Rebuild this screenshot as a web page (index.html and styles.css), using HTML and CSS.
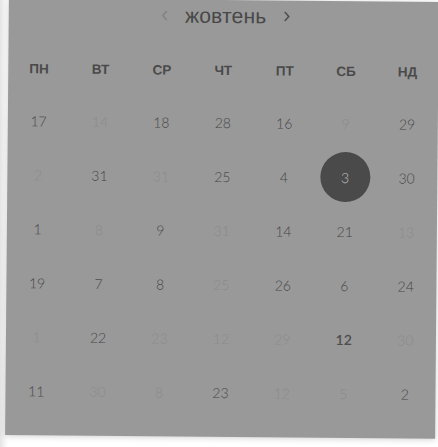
FILE: index.html
```html
<!DOCTYPE html>
<html lang="uk">
<head>
<meta charset="utf-8">
<link rel="stylesheet" href="styles.css">
</head>
<body>
<div class="page">
  <div class="card">
    <div class="month">
      <svg class="chev chev-prev" width="8" height="12" viewBox="0 0 8 12"><polyline points="6,1.5 2,6 6,10.5" fill="none" stroke="currentColor" stroke-width="1.6"/></svg>
      <span class="month-name">жовтень</span>
      <svg class="chev chev-next" width="8" height="12" viewBox="0 0 8 12"><polyline points="2,1.5 6,6 2,10.5" fill="none" stroke="currentColor" stroke-width="1.6"/></svg>
    </div>
    <div class="weekdays">
      <span>ПН</span><span>ВТ</span><span>СР</span><span>ЧТ</span><span>ПТ</span><span>СБ</span><span>НД</span>
    </div>
    <div class="days">
      <span class="d">17</span><span class="f">14</span><span class="d">18</span><span class="d">28</span><span class="d">16</span><span class="f">9</span><span class="d">29</span>
      <span class="f">2</span><span class="d">31</span><span class="f">31</span><span class="d">25</span><span class="d">4</span><span class="sel"><b>3</b></span><span class="d">30</span>
      <span class="d">1</span><span class="f">8</span><span class="d">9</span><span class="f">31</span><span class="d">14</span><span class="d">21</span><span class="f">13</span>
      <span class="d">19</span><span class="d">7</span><span class="d">8</span><span class="f">25</span><span class="d">26</span><span class="d">6</span><span class="d">24</span>
      <span class="f">1</span><span class="d">22</span><span class="f">23</span><span class="f">12</span><span class="f">29</span><span class="d strong">12</span><span class="f">30</span>
      <span class="d">11</span><span class="f">30</span><span class="f">8</span><span class="d">23</span><span class="f">12</span><span class="f">5</span><span class="d">2</span>
    </div>
  </div>
</div>
</body>
</html>
```

FILE: styles.css
```css
html, body {
  margin: 0;
  padding: 0;
  background: #ffffff;
  overflow: hidden;
}

.page {
  width: 438px;
  height: 447px;
  padding-left: 7px;
  box-sizing: border-box;
  background: linear-gradient(to right, #e4e4e4 0, #f6f6f6 5px, #ffffff 8px);
}

.card {
  width: 430px;
  height: 437px;
  background: #999999;
  box-sizing: border-box;
  padding-bottom: 18px;
  transform: rotate(0.5deg);
  transform-origin: 50% 50%;
  box-shadow: 0 1px 6px rgba(0, 0, 0, 0.18);
  font-family: "Lato", "Open Sans", sans-serif;
}

.month {
  height: 32px;
  display: flex;
  align-items: center;
  justify-content: center;
  gap: 16px;
  padding-left: 4px;
}

.month-name {
  font-family: "Liberation Sans", Arial, sans-serif;
  font-size: 21px;
  color: #484848;
  letter-spacing: 0.2px;
}

.chev {
  display: block;
}

.chev-prev {
  color: #838383;
}

.chev-next {
  color: #505050;
}

.weekdays {
  margin-top: 27px;
  height: 22px;
  display: grid;
  grid-template-columns: repeat(7, 1fr);
  align-items: center;
  justify-items: center;
  font-family: "Liberation Sans", Arial, sans-serif;
  font-weight: bold;
  font-size: 13.5px;
  color: #4a4a4a;
}

.days {
  margin-top: 14px;
  display: grid;
  grid-template-columns: repeat(7, 1fr);
  grid-auto-rows: 54px;
  align-items: center;
  justify-items: center;
  font-size: 14px;
  font-weight: 300;
}

.d {
  color: #464646;
}

.f {
  color: #8b8b8b;
}

.strong {
  font-weight: 600;
  color: #4e4e4e;
}

.sel {
  width: 50px;
  height: 50px;
  border-radius: 50%;
  background: #4a4a4a;
  display: flex;
  align-items: center;
  justify-content: center;
}

.sel b {
  font-weight: 300;
  color: #c2c2c2;
}
```
